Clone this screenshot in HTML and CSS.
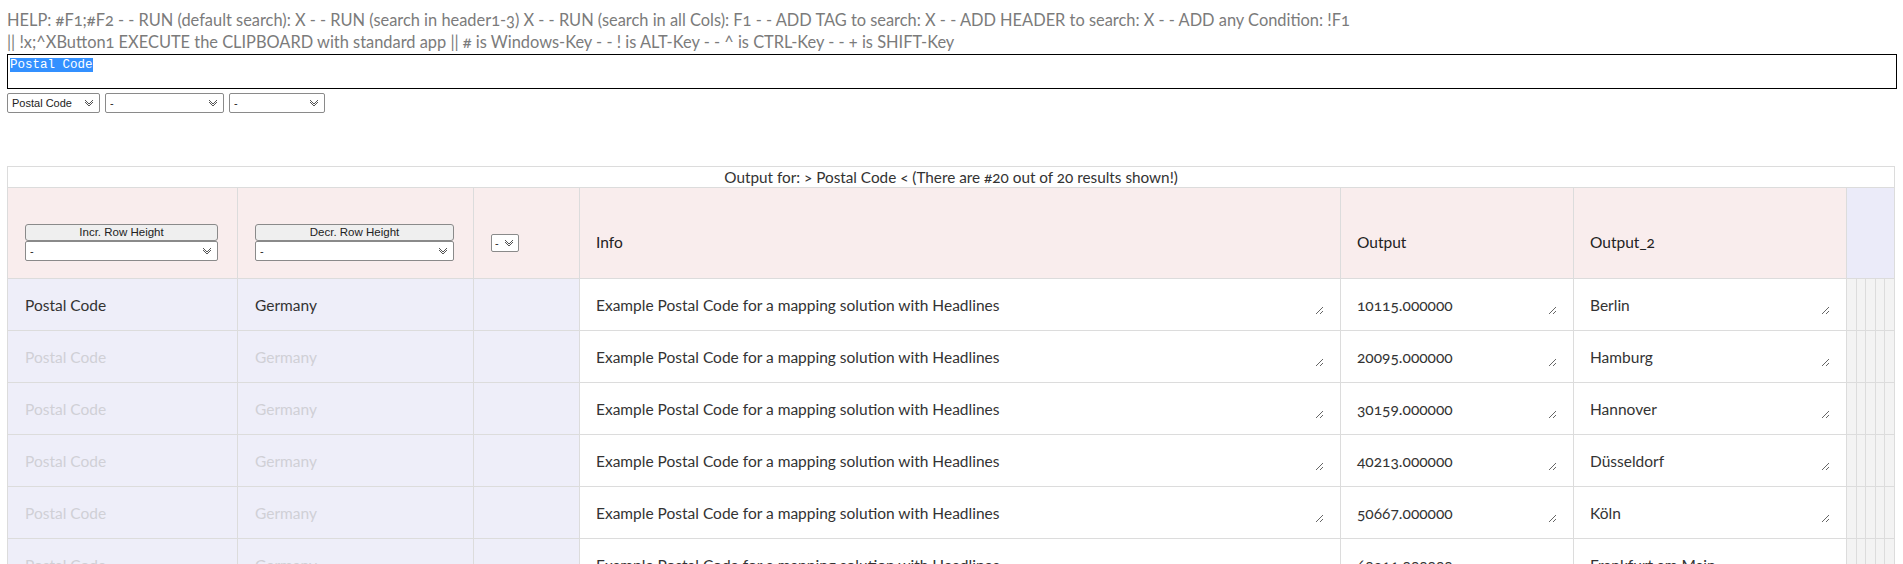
FILE: index.html
```html
<!DOCTYPE html>
<html lang="en">
<head>
<meta charset="utf-8">
<title>Postal Code Search</title>
<link rel="stylesheet" href="styles.css">
</head>
<body>
<div class="page">
  <div class="help">
    <div>HELP: #F1;#F2 - - RUN (default search): X - - RUN (search in header1-3) X - - RUN (search in all Cols): F1 - - ADD TAG to search: X - - ADD HEADER to search: X - - ADD any Condition: !F1</div>
    <div>|| !x;^XButton1 EXECUTE the CLIPBOARD with standard app || # is Windows-Key - - ! is ALT-Key - - ^ is CTRL-Key - - + is SHIFT-Key</div>
  </div>
  <div class="query"><span class="sel">Postal Code</span></div>
  <div class="filters">
    <span class="dd w1"><select><option>Postal Code</option></select><svg width="10" height="8" viewBox="0 0 10 8"><path d="M1 1 L5 5 L9 1 M1 3 L5 7 L9 3" fill="none" stroke="#555" stroke-width="1"/></svg></span>
    <span class="dd w2"><select><option>-</option></select><svg width="10" height="8" viewBox="0 0 10 8"><path d="M1 1 L5 5 L9 1 M1 3 L5 7 L9 3" fill="none" stroke="#555" stroke-width="1"/></svg></span>
    <span class="dd w3"><select><option>-</option></select><svg width="10" height="8" viewBox="0 0 10 8"><path d="M1 1 L5 5 L9 1 M1 3 L5 7 L9 3" fill="none" stroke="#555" stroke-width="1"/></svg></span>
  </div>

  <table class="results">
    <colgroup>
      <col class="c1"><col class="c2"><col class="c3"><col class="c4"><col class="c5"><col class="c6">
      <col class="cs"><col class="cs"><col class="cs"><col class="cs"><col class="cs">
    </colgroup>
    <tr class="cap-row"><td colspan="11">Output for: &gt; Postal Code &lt; (There are #20 out of 20 results shown!)</td></tr>
    <tr class="head-row">
      <th class="ctl">
        <button class="hbtn">Incr. Row Height</button>
        <span class="dd full"><select><option>-</option></select><svg width="10" height="8" viewBox="0 0 10 8"><path d="M1 1 L5 5 L9 1 M1 3 L5 7 L9 3" fill="none" stroke="#555" stroke-width="1"/></svg></span>
      </th>
      <th class="ctl">
        <button class="hbtn">Decr. Row Height</button>
        <span class="dd full"><select><option>-</option></select><svg width="10" height="8" viewBox="0 0 10 8"><path d="M1 1 L5 5 L9 1 M1 3 L5 7 L9 3" fill="none" stroke="#555" stroke-width="1"/></svg></span>
      </th>
      <th class="ctl"><span class="dd tiny"><select><option>-</option></select><svg width="10" height="8" viewBox="0 0 10 8"><path d="M1 1 L5 5 L9 1 M1 3 L5 7 L9 3" fill="none" stroke="#555" stroke-width="1"/></svg></span></th>
      <th>Info</th>
      <th>Output</th>
      <th>Output_2</th>
      <th class="extra" colspan="5"></th>
    </tr>
    <tr class="row first">
      <td class="key">Postal Code</td><td class="key">Germany</td><td class="key"></td>
      <td class="txt"><textarea>Example Postal Code for a mapping solution with Headlines</textarea></td>
      <td class="txt"><textarea>10115.000000</textarea></td>
      <td class="txt"><textarea>Berlin</textarea></td>
      <td class="s"></td><td class="s"></td><td class="s"></td><td class="s"></td><td class="s"></td>
    </tr>
    <tr class="row">
      <td class="key">Postal Code</td><td class="key">Germany</td><td class="key"></td>
      <td class="txt"><textarea>Example Postal Code for a mapping solution with Headlines</textarea></td>
      <td class="txt"><textarea>20095.000000</textarea></td>
      <td class="txt"><textarea>Hamburg</textarea></td>
      <td class="s"></td><td class="s"></td><td class="s"></td><td class="s"></td><td class="s"></td>
    </tr>
    <tr class="row">
      <td class="key">Postal Code</td><td class="key">Germany</td><td class="key"></td>
      <td class="txt"><textarea>Example Postal Code for a mapping solution with Headlines</textarea></td>
      <td class="txt"><textarea>30159.000000</textarea></td>
      <td class="txt"><textarea>Hannover</textarea></td>
      <td class="s"></td><td class="s"></td><td class="s"></td><td class="s"></td><td class="s"></td>
    </tr>
    <tr class="row">
      <td class="key">Postal Code</td><td class="key">Germany</td><td class="key"></td>
      <td class="txt"><textarea>Example Postal Code for a mapping solution with Headlines</textarea></td>
      <td class="txt"><textarea>40213.000000</textarea></td>
      <td class="txt"><textarea>Düsseldorf</textarea></td>
      <td class="s"></td><td class="s"></td><td class="s"></td><td class="s"></td><td class="s"></td>
    </tr>
    <tr class="row">
      <td class="key">Postal Code</td><td class="key">Germany</td><td class="key"></td>
      <td class="txt"><textarea>Example Postal Code for a mapping solution with Headlines</textarea></td>
      <td class="txt"><textarea>50667.000000</textarea></td>
      <td class="txt"><textarea>Köln</textarea></td>
      <td class="s"></td><td class="s"></td><td class="s"></td><td class="s"></td><td class="s"></td>
    </tr>
    <tr class="row">
      <td class="key">Postal Code</td><td class="key">Germany</td><td class="key"></td>
      <td class="txt"><textarea>Example Postal Code for a mapping solution with Headlines</textarea></td>
      <td class="txt"><textarea>60311.000000</textarea></td>
      <td class="txt"><textarea>Frankfurt am Main</textarea></td>
      <td class="s"></td><td class="s"></td><td class="s"></td><td class="s"></td><td class="s"></td>
    </tr>
    <tr class="row">
      <td class="key">Postal Code</td><td class="key">Germany</td><td class="key"></td>
      <td class="txt"><textarea>Example Postal Code for a mapping solution with Headlines</textarea></td>
      <td class="txt"><textarea>70173.000000</textarea></td>
      <td class="txt"><textarea>Stuttgart</textarea></td>
      <td class="s"></td><td class="s"></td><td class="s"></td><td class="s"></td><td class="s"></td>
    </tr>
  </table>
</div>
</body>
</html>
```
FILE: styles.css
```css
* { box-sizing: border-box; }
html, body { margin: 0; background: #fff; }
body {
  font-family: Lato, "Open Sans", sans-serif;
  font-variant-numeric: oldstyle-nums;
  color: #333;
}
.page { padding: 9px 6px 0 7px; }

.help {
  color: #7b7b7b;
  font-size: 16.4px;
  line-height: 22px;
  white-space: nowrap;
}

.query {
  height: 35px;
  margin-top: 1px;
  border: 1px solid #000;
  padding: 3px 2px;
  font-family: "Liberation Mono", "DejaVu Sans Mono", monospace;
  font-size: 12.5px;
  line-height: 14px;
}
.query .sel { background: #3390ff; color: #fff; }

.filters { display: flex; gap: 5px; margin-top: 4px; }

.dd { position: relative; display: inline-block; }
.dd select {
  appearance: none;
  -webkit-appearance: none;
  display: block;
  width: 100%;
  height: 20px;
  border: 1px solid #8a8a8a;
  border-radius: 2px;
  background: #fff;
  font: 11px "Liberation Sans", Arial, sans-serif;
  color: #222;
  padding: 0 18px 0 4px;
}
.dd svg { position: absolute; right: 6px; top: 6px; pointer-events: none; }
.dd.w1 { width: 93px; }
.dd.w2 { width: 119px; }
.dd.w3 { width: 96px; }
.dd.full { display: block; width: 100%; }
.dd.tiny { width: 28px; }
.dd.tiny select { height: 18px; padding: 0 12px 0 3px; }
.dd.tiny svg { right: 5px; top: 5px; }

.results {
  margin-top: 53px;
  width: 1887px;
  table-layout: fixed;
  border-collapse: collapse;
  font-size: 15.5px;
}
.results col.c1 { width: 230px; }
.results col.c2 { width: 236px; }
.results col.c3 { width: 106px; }
.results col.c4 { width: 761px; }
.results col.c5 { width: 233px; }
.results col.c6 { width: 273px; }
.results col.cs { width: 9.6px; }

.results td, .results th {
  border: 1px solid #dcdcdc;
  padding: 0 16px;
  vertical-align: middle;
  text-align: left;
  font-weight: normal;
}

.cap-row td {
  height: 21px;
  padding: 0;
  text-align: center;
  font-size: 15.3px;
  color: #333;
}

.head-row th {
  height: 91px;
  background: #f9eded;
  padding-top: 18px;
  color: #222;
}
.head-row th.ctl { padding: 18px 19px 0 17px; }
.head-row th.extra { background: #ebebf9; padding: 0; }

.hbtn {
  display: block;
  width: 100%;
  height: 17px;
  margin: 0;
  padding: 0;
  border: 1px solid #8a8a8a;
  border-radius: 3px;
  background: #efefef;
  font: 11.5px "Liberation Sans", Arial, sans-serif;
  color: #222;
}

.row td { height: 52px; }
.row td.key { background: #eeeef9; color: #d0d0d6; padding-left: 17px; }
.row.first td.key { color: #333; }
.row td.txt { padding: 0 16px 0 14px; background: #fff; }
.row td.s { background: #f3f3f3; padding: 0; }

.row textarea {
  display: block;
  width: 100%;
  height: 20px;
  margin: 0;
  padding: 1px 2px;
  border: none;
  outline: none;
  resize: vertical;
  overflow: hidden;
  background: transparent;
  font-family: Lato, "Open Sans", sans-serif;
  font-variant-numeric: oldstyle-nums;
  font-size: 15.5px;
  line-height: 18px;
  color: #333;
}
```
